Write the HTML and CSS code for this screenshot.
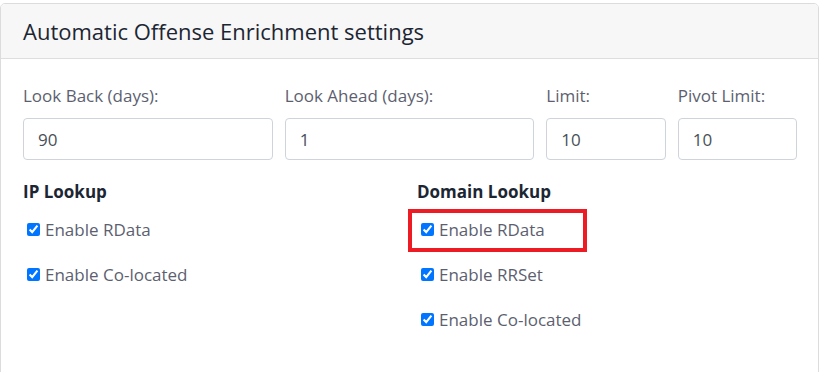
FILE: index.html
```html
<!DOCTYPE html>
<html lang="en">
<head>
  <meta charset="UTF-8">
  <title>Automatic Offense Enrichment settings</title>
  <link rel="stylesheet" href="styles.css">
</head>
<body>
<div class="card">
  <div class="card-header">Automatic Offense Enrichment settings</div>

  <div class="card-body">
    <div class="fields">
      <div class="field">
        <label for="lookback">Look Back (days):</label>
        <input class="form-control" id="lookback" type="text" value="90">
      </div>
      <div class="field">
        <label for="lookahead">Look Ahead (days):</label>
        <input class="form-control" id="lookahead" type="text" value="1">
      </div>
      <div class="field">
        <label for="limit">Limit:</label>
        <input class="form-control" id="limit" type="text" value="10">
      </div>
      <div class="field">
        <label for="pivot">Pivot Limit:</label>
        <input class="form-control" id="pivot" type="text" value="10">
      </div>
    </div>

    <div class="lookups">
      <div class="lookup">
        <h4>IP Lookup</h4>
        <label class="check"><input type="checkbox" checked> Enable RData</label>
        <label class="check"><input type="checkbox" checked> Enable Co-located</label>
      </div>
      <div class="lookup">
        <h4>Domain Lookup</h4>
        <label class="check marked"><input type="checkbox" checked> Enable RData</label>
        <label class="check"><input type="checkbox" checked> Enable RRSet</label>
        <label class="check"><input type="checkbox" checked> Enable Co-located</label>
      </div>
    </div>
  </div>
</div>
</body>
</html>
```

FILE: styles.css
```css
body {
  margin: 0;
  font-family: 'Open Sans', 'Noto Sans', sans-serif;
  background: #fff;
  color: #212529;
}

.card {
  margin-top: 3px;
  width: 817px;
  height: 380px;
  border: 1px solid #dcdcdc;
  border-radius: 5px;
  overflow: hidden;
}

.card-header {
  height: 54px;
  line-height: 54px;
  padding-left: 22px;
  background-color: #f7f7f7;
  border-bottom: 1px solid #dedede;
  font-size: 22px;
  color: #1c2633;
}

.card-body {
  padding: 25px 21px 0 22px;
}

.fields {
  display: grid;
  grid-template-columns: 249fr 249fr 119fr 119fr;
  column-gap: 12px;
}

.field label {
  display: block;
  font-size: 17px;
  line-height: 24px;
  color: #5d5f70;
  margin-bottom: 10px;
}

.form-control {
  box-sizing: border-box;
  width: 100%;
  height: 42px;
  padding: 0 14px;
  border: 1px solid #ced4da;
  border-radius: 4px;
  font-family: inherit;
  font-size: 17px;
  color: #495057;
}

.lookups {
  display: grid;
  grid-template-columns: 1fr 1fr;
  column-gap: 14px;
  margin-top: 20px;
}

.lookup h4 {
  margin: 0 0 13px;
  font-size: 17px;
  line-height: 24px;
  font-weight: bold;
  color: #1c2633;
}

.check {
  display: flex;
  align-items: center;
  height: 24px;
  margin-bottom: 21px;
  font-size: 17px;
  color: #5d5f70;
}

.check input {
  margin: 0 5px 0 4px;
}

/* annotation box drawn over the first domain option */
.marked {
  position: relative;
  width: fit-content;
}

.marked::after {
  content: "";
  position: absolute;
  left: -9px;
  right: -42px;
  top: -8px;
  bottom: -11px;
  border: 4px solid #ed1c24;
}
```
